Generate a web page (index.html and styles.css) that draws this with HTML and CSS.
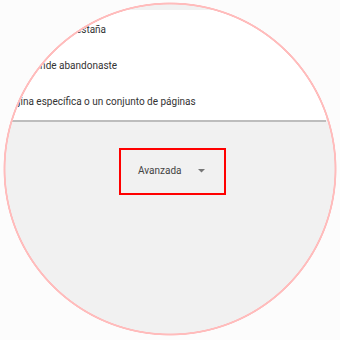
FILE: index.html
```html
<!DOCTYPE html>
<html lang="es">
<head>
<meta charset="utf-8">
<link rel="stylesheet" href="styles.css">
</head>
<body>
<div class="page">
  <div class="card">
    <div class="row"><span class="label">Abrir la página Nueva pestaña</span></div>
    <div class="row"><span class="label">Continuar donde abandonaste</span></div>
    <div class="row"><span class="label">Abrir una página específica o un conjunto de páginas</span></div>
  </div>
  <div class="advanced">
    <button class="adv-btn">
      <span class="adv-text">Avanzada</span>
      <svg class="caret" width="7" height="4" viewBox="0 0 7 4"><path d="M0 0H7L3.5 3.5Z" fill="#777777"/></svg>
    </button>
  </div>
</div>
<div class="lens"></div>
</body>
</html>
```
FILE: styles.css
```css
html, body {
  margin: 0;
  padding: 0;
}
body {
  width: 340px;
  height: 340px;
  background: #f1f1f1;
  font-family: Roboto, "Liberation Sans", sans-serif;
  overflow: hidden;
  position: relative;
}
.page {
  padding: 10px 14px 0 10px;
}
.card {
  background: #ffffff;
  padding: 1px 0 1px 0;
  border-bottom: 2px solid #bdbdbd;
  overflow: hidden;
}
.row {
  height: 36px;
  display: flex;
  align-items: center;
  white-space: nowrap;
}
.label {
  font-size: 10px;
  color: #333333;
}
.row:nth-child(1) .label { margin-left: -37px; }
.row:nth-child(2) .label { margin-left: -27px; }
.row:nth-child(3) .label { margin-left: -49px; }
.advanced {
  padding-top: 26px;
  padding-left: 109px;
}
.adv-btn {
  display: flex;
  align-items: center;
  width: 107px;
  height: 47px;
  box-sizing: border-box;
  border: 2px solid #ff0000;
  background: transparent;
  padding: 0 0 2px 17px;
  margin: 0;
  font-family: inherit;
}
.adv-text {
  font-size: 10px;
  color: #444444;
}
.caret {
  margin-left: 16px;
  margin-top: 1px;
}
.lens {
  position: absolute;
  inset: 0;
  pointer-events: none;
  background: radial-gradient(circle at 170px 169px,
    rgba(252,252,252,0) 164.2px,
    #ffbcbc 164.8px,
    #ffbcbc 166.2px,
    #fcfcfc 166.8px);
}
```
